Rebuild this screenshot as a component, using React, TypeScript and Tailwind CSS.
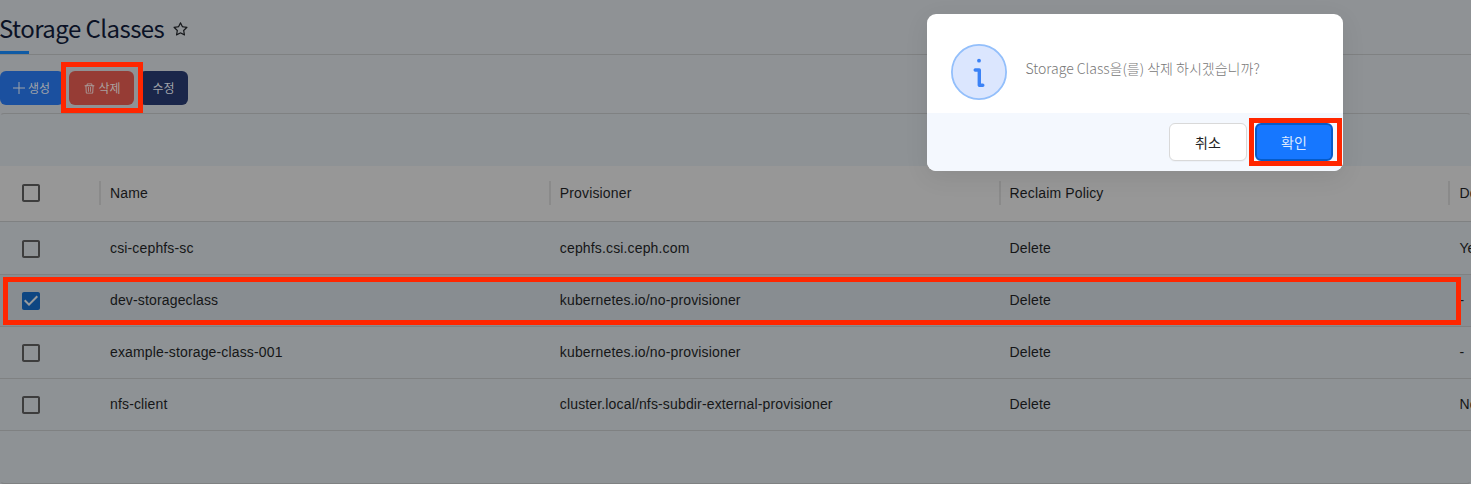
import React from "react";

const rows = [
  { name: "csi-cephfs-sc", provisioner: "cephfs.csi.ceph.com", policy: "Delete", def: "Yes", checked: false },
  { name: "dev-storageclass", provisioner: "kubernetes.io/no-provisioner", policy: "Delete", def: "-", checked: true },
  { name: "example-storage-class-001", provisioner: "kubernetes.io/no-provisioner", policy: "Delete", def: "-", checked: false },
  { name: "nfs-client", provisioner: "cluster.local/nfs-subdir-external-provisioner", policy: "Delete", def: "No", checked: false },
];

function Checkbox({ checked = false }: { checked?: boolean }) {
  return (
    <svg viewBox="0 0 24 24" className={checked ? "h-6 w-6 fill-[#0e4682]" : "h-6 w-6 fill-[#3d3d3d]"}>
      {checked ? (
        <>
          <path d="M4 4h16v16H4z" fill="#999b9c" />
          <path d="M19 3H5c-1.11 0-2 .9-2 2v14c0 1.1.89 2 2 2h14c1.11 0 2-.9 2-2V5c0-1.1-.89-2-2-2zm-9 14l-5-5 1.41-1.41L10 14.17l7.59-7.59L19 8l-9 9z" />
        </>
      ) : (
        <path d="M19 5v14H5V5h14m0-2H5c-1.1 0-2 .9-2 2v14c0 1.1.9 2 2 2h14c1.1 0 2-.9 2-2V5c0-1.1-.9-2-2-2z" />
      )}
    </svg>
  );
}

function HeadCell({ label }: { label: string }) {
  return (
    <div className="flex w-[449.8px] shrink-0 items-center">
      <span className="mb-0.5 -ml-px h-6 w-0.5 shrink-0 bg-[#8a8a8a]" />
      <span className="pl-[9px]">{label}</span>
    </div>
  );
}

export default function App() {
  return (
    <div className="relative h-[484px] w-[1471px] overflow-hidden bg-[#8f9295] font-['Noto_Sans_CJK_KR',sans-serif]">
      <header className="relative flex h-[55px] items-center border-b border-[#7f8182] pt-[5px]">
        <h1 className="-mt-1 -ml-px w-[165px] text-[24px] leading-9 font-normal tracking-[-0.55px] whitespace-nowrap text-[#0b1226]">Storage Classes</h1>
        <svg viewBox="0 0 1024 1024" className="ml-2 h-[17px] w-[17px] fill-[#15171a]">
          <path d="M908.1 353.1l-253.9-36.9L540.7 86.1c-3.1-6.3-8.2-11.4-14.5-14.5-15.8-7.8-35-1.3-42.9 14.5L369.8 316.2l-253.9 36.9c-7 1-13.4 4.3-18.3 9.3a32.05 32.05 0 0 0 .6 45.3l183.7 179.1-43.4 252.9a31.95 31.95 0 0 0 46.4 33.7L512 754l227.1 119.4c6.2 3.3 13.4 4.4 20.3 3.2 17.4-3 29.1-19.5 26.1-36.9l-43.4-252.9 183.7-179.1c5-4.9 8.3-11.3 9.3-18.3 2.7-17.5-9.5-33.7-27-36.3zM664.8 561.6l36.1 210.3L512 672.7 323.1 772l36.1-210.3-152.8-149L417.6 382 512 190.7 606.4 382l211.2 30.7-152.8 148.9z" />
        </svg>
        <span className="absolute bottom-0 left-0 h-[3px] w-[29px] bg-[#105ba5]" />
      </header>

      <div className="flex h-[58px] items-start pt-4 text-[12px] leading-[34px] text-[#a1a4a9]">
        <button className="flex h-[34px] w-16 shrink-0 items-center gap-[3px] rounded-md bg-[#1b509f] pl-[13px]">
          <svg viewBox="0 0 12 12" className="h-3 w-3 shrink-0" fill="none" stroke="currentColor" strokeWidth="1">
            <path d="M6 0v12M0 6h12" />
          </svg>
          <span className="whitespace-nowrap">생성</span>
        </button>
        <button className="ml-[5px] flex h-[34px] w-[65px] shrink-0 items-center gap-[3px] rounded-md bg-[#963c35] pl-[13.5px] text-[#aaa09f]">
          <svg viewBox="0 0 1024 1024" className="h-[13px] w-[13px] shrink-0" fill="currentColor">
            <path d="M360 184h-8c4.400 0 8-3.600 8-8v8h304v-8c0 4.400 3.600 8 8 8h-8v72h72v-80c0-35.300-28.700-64-64-64H352c-35.300 0-64 28.700-64 64v80h72v-72zm504 72H160c-17.700 0-32 14.300-32 32v32c0 4.400 3.600 8 8 8h60.400l24.700 523c1.600 34.100 29.800 61 63.900 61h454c34.200 0 62.300-26.800 63.900-61l24.700-523H888c4.400 0 8-3.600 8-8v-32c0-17.700-14.300-32-32-32zM731.300 840H292.700l-24.200-512h487l-24.200 512zM392 400h64v370h-64zM568 400h64v370h-64z" />
          </svg>
          <span className="whitespace-nowrap">삭제</span>
        </button>
        <button className="ml-[5px] h-[34px] w-[49px] shrink-0 rounded-md bg-[#1a264a] text-center">수정</button>
      </div>

      <section className="h-[371px] rounded-[4px] border border-[#7f8182] border-x-transparent bg-[#8e9295] font-['Liberation_Sans',sans-serif] text-[14px] tracking-[0.15px] text-[#151617]">
        <div className="h-[52px]" />
        <div className="-mx-px flex h-14 items-center border-b border-[#7f8182] bg-[#979797]">
          <div className="flex w-[100px] shrink-0 pb-0.5 pl-[19px]"><Checkbox /></div>
          <HeadCell label="Name" />
          <HeadCell label="Provisioner" />
          <HeadCell label="Reclaim Policy" />
          <HeadCell label="Default" />
        </div>
        {rows.map((r, i) => (
          <div
            key={r.name}
            className={
              "-mx-px flex items-center border-b border-[#7f8182] " +
              (i === 0 ? "h-[53px] " : "h-[52px] ") +
              (r.checked ? "bg-[#888d91]" : "")
            }
          >
            <div className="flex w-[100px] shrink-0 pt-px pl-[19px]"><Checkbox checked={r.checked} /></div>
            <div className="w-[449.8px] shrink-0 pl-[10px]">{r.name}</div>
            <div className="w-[449.8px] shrink-0 pl-[10px]">{r.provisioner}</div>
            <div className="w-[449.8px] shrink-0 pl-[10px]">{r.policy}</div>
            <div className="w-[449.8px] shrink-0 pl-[10px]">{r.def}</div>
          </div>
        ))}
      </section>

      <div className="absolute top-[62px] left-[61px] h-[51px] w-[82px] border-[5px] border-[#ff2600]" />
      <div className="absolute top-[277px] left-[3px] h-12 w-[1458px] border-[5px] border-[#ff2600]" />

      <div className="absolute top-[14px] left-[927px] flex h-[157px] w-[416px] flex-col overflow-hidden rounded-[9px] bg-white shadow-[0_6px_24px_rgba(0,0,0,0.08)]">
        <div className="flex h-[99px] shrink-0 items-start pt-[30px] pl-6">
          <svg viewBox="0 0 56 56" className="h-14 w-14 shrink-0">
            <circle cx="28" cy="28" r="27.1" fill="#dbe6fe" stroke="#93bffb" strokeWidth="1.8" />
            <circle cx="28" cy="16.7" r="1.9" fill="#3b82f6" />
            <path d="M24.200 26h4.100v15.200h3.500" fill="none" stroke="#3b82f6" strokeWidth="3.400" strokeLinecap="round" strokeLinejoin="round" />
          </svg>
          <p className="mt-3 ml-[18.5px] text-[14px] leading-6 font-light whitespace-nowrap text-[#777]">Storage Class을(를) 삭제 하시겠습니까?</p>
        </div>
        <div className="flex h-[58px] items-start justify-end gap-2 bg-[#f4f8fe] pt-[10px] pr-[10px] text-[14px]">
          <button className="h-[38px] w-[78px] rounded-md border border-[#d9d9d9] bg-white text-[#222] shadow-[0_1px_1px_rgba(0,0,0,0.03)]">취소</button>
          <button className="h-[38px] w-[78px] rounded-md border-2 border-[#065bc9] bg-[#1677ff] text-[#dceaff]">확인</button>
        </div>
      </div>
      <div className="absolute top-[118px] left-[1249px] h-12 w-[93px] border-[5px] border-[#ff2600]" />
    </div>
  );
}
